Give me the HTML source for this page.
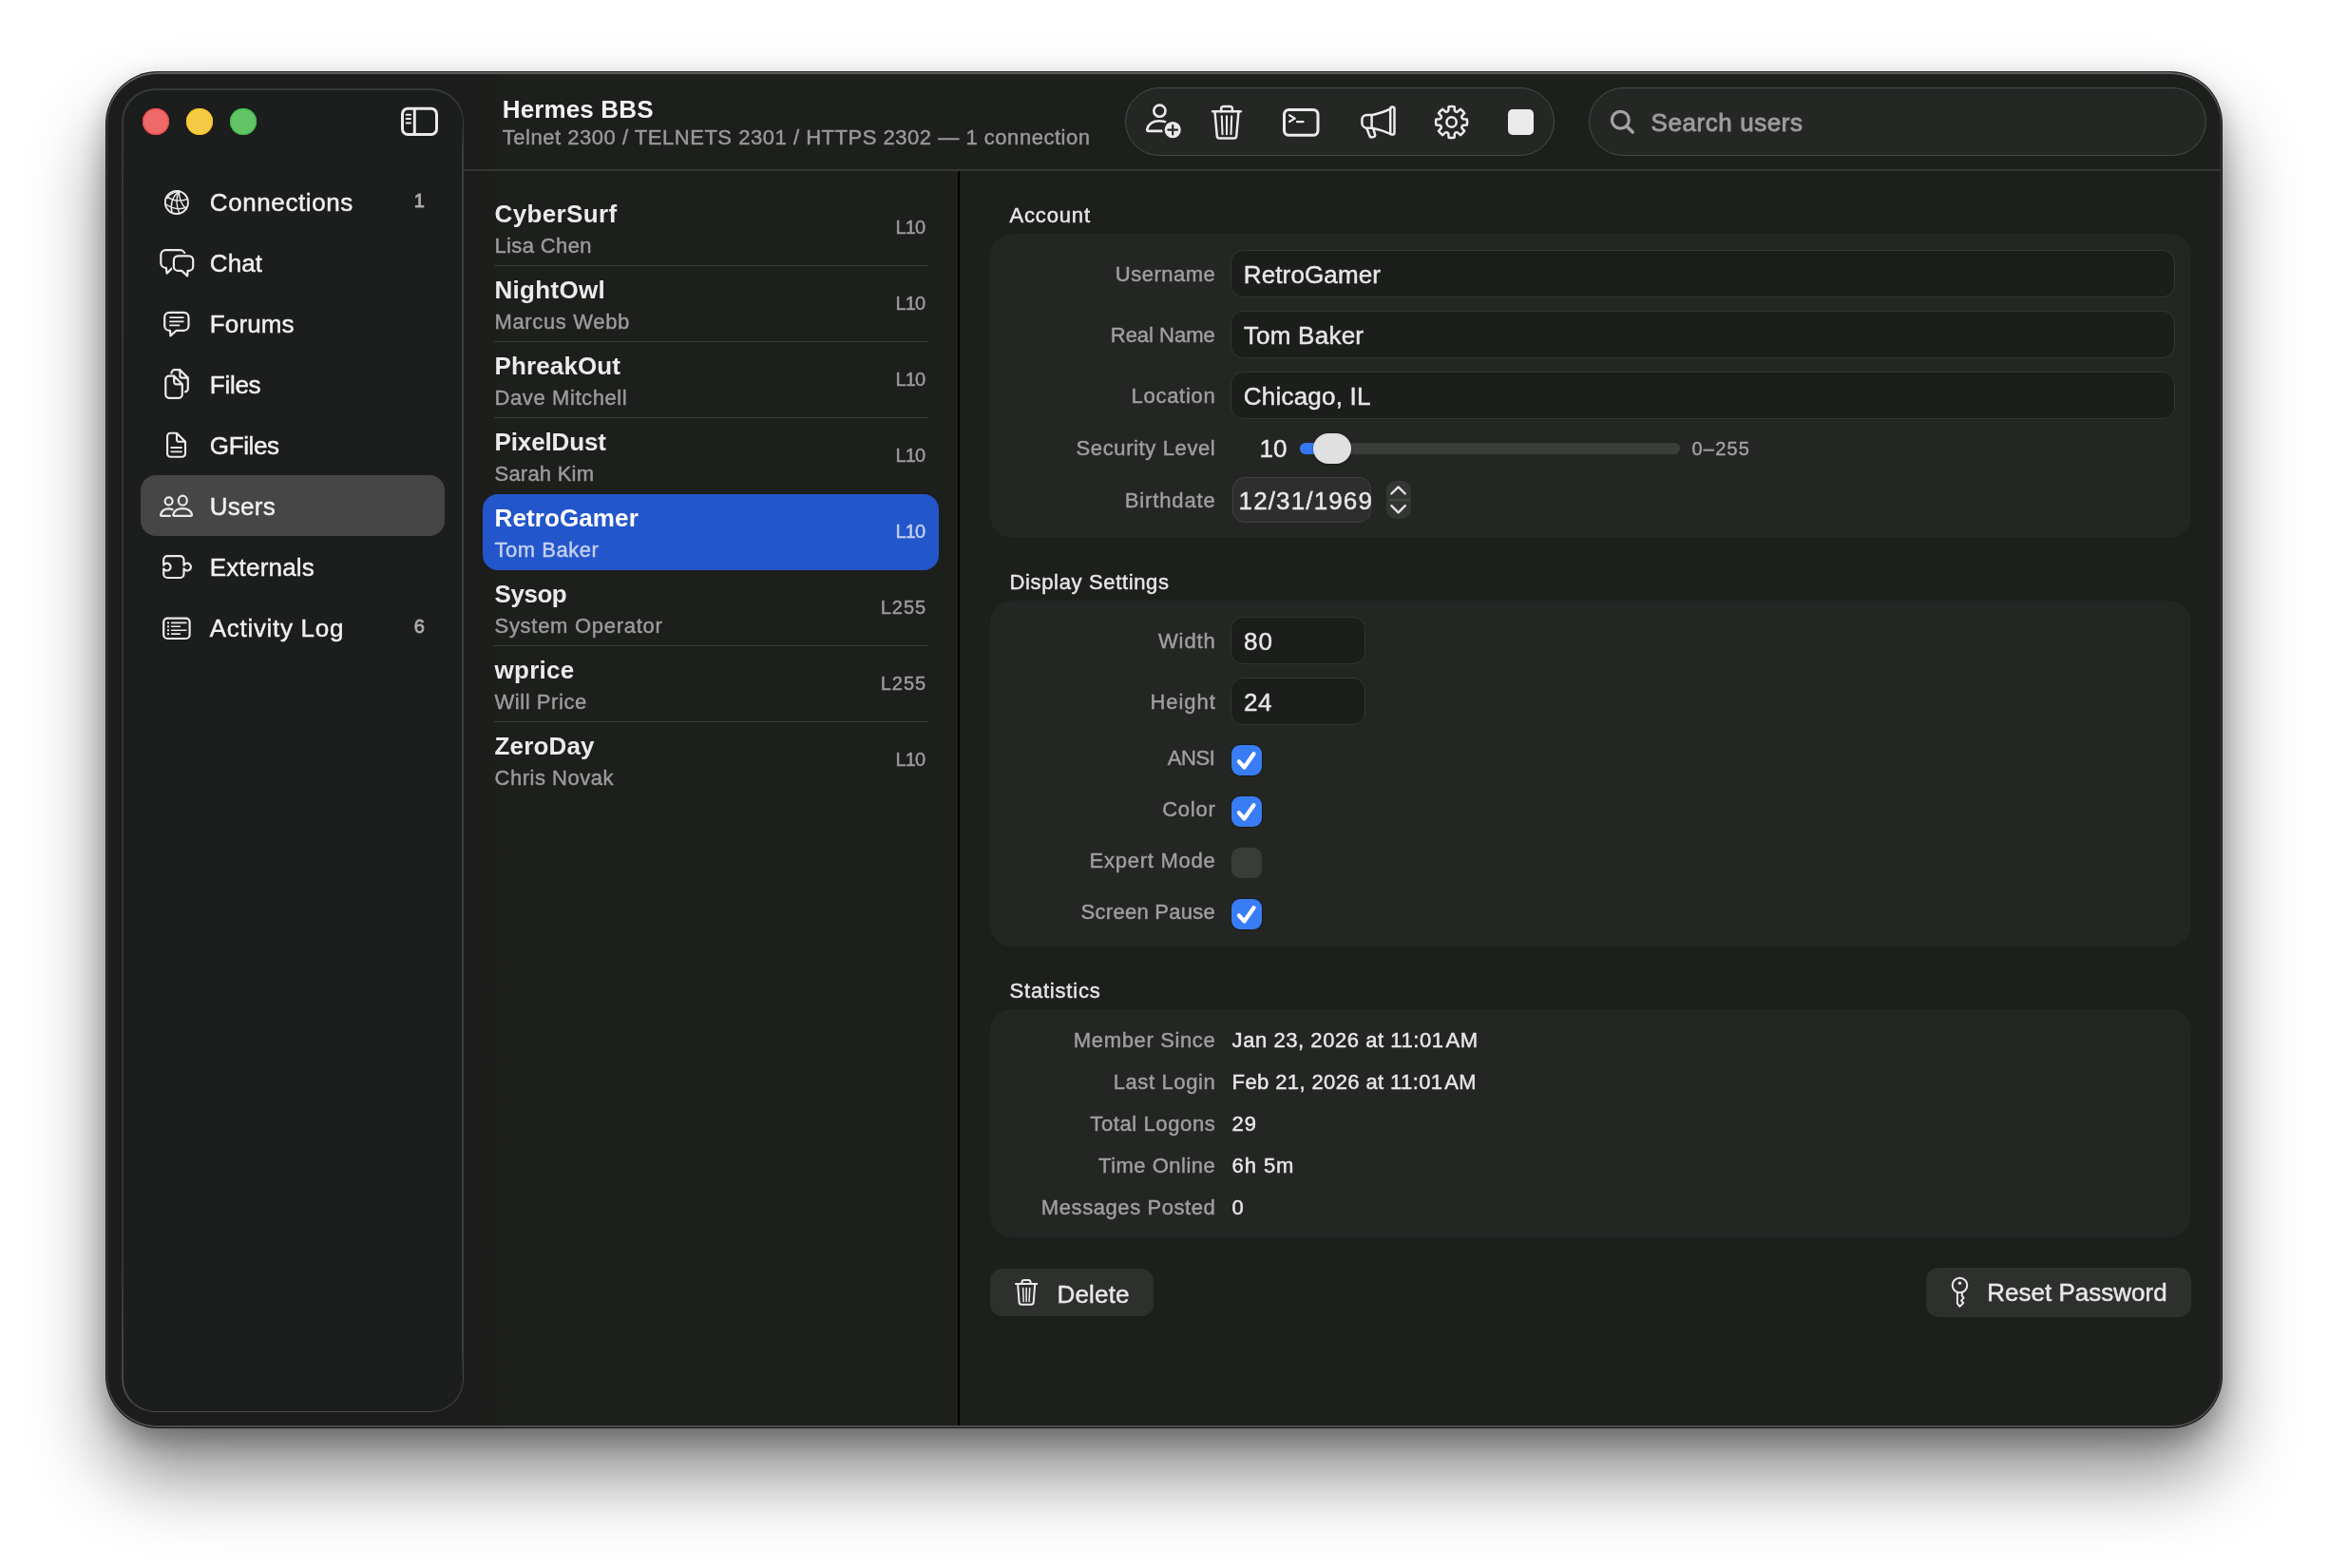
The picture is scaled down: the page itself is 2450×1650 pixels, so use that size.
<!DOCTYPE html>
<html lang="en"><head><meta charset="utf-8"><title>Hermes BBS</title><style>
html,body{margin:0;padding:0;background:#fff;}
body{width:2450px;height:1650px;position:relative;overflow:hidden;font-family:"Liberation Sans", Arial, sans-serif;}
.b{position:absolute;}
.t{position:absolute;white-space:nowrap;-webkit-text-stroke:0.45px currentColor;}
.t.bd{-webkit-text-stroke:0;}
.t.sb{-webkit-text-stroke:0.85px currentColor;}
#txt{position:absolute;left:0;top:0;width:2450px;height:1650px;will-change:transform;}
#ic{position:absolute;left:0;top:0;}
#win{position:absolute;left:112px;top:76px;width:2226px;height:1426px;border-radius:54px;background:linear-gradient(90deg,#1b1c1b 0,#1b1c1b 378px,rgba(29,31,28,0) 420px,rgba(29,31,28,0) 100%),#1d1f1c;
 box-shadow:0 0 0 1px rgba(0,0,0,.88), inset 0 2px 0 rgba(255,255,255,.24), inset 0 -2px 0 rgba(255,255,255,.15), inset 0 0 0 1.5px rgba(255,255,255,.10), 0 50px 80px rgba(0,0,0,.47), 0 12px 28px rgba(0,0,0,.28);}
</style></head>
<body>
<div id="win"></div>
<div class="b" style="left:128px;top:93px;width:360px;height:1393px;border-radius:35px;background:linear-gradient(180deg,#373c3b 0,#323534 25%,#333533 88%,#4b4c4b 100%);"></div>
<div class="b" style="left:129.5px;top:94.5px;width:357.0px;height:1390.0px;border-radius:33.5px;background:#1c1d1d;"></div>
<div class="b" style="left:486.2px;top:128px;width:1.8000000000000114px;height:1324px;border-radius:0px;background:linear-gradient(180deg,rgba(58,62,60,0) 0,#3a3e3c 30px,#3a3e3c calc(100% - 30px),rgba(58,62,60,0) 100%);"></div>
<div class="b" style="left:150px;top:114px;width:28px;height:28px;border-radius:14px;background:#ee6969;box-shadow:inset 0 0 0 1.2px #f04a48;"></div>
<div class="b" style="left:196px;top:114px;width:28px;height:28px;border-radius:14px;background:#f4cb45;box-shadow:inset 0 0 0 1.2px #f8c620;"></div>
<div class="b" style="left:242px;top:114px;width:28px;height:28px;border-radius:14px;background:#62c466;box-shadow:inset 0 0 0 1.2px #3fbf4a;"></div>
<div class="b" style="left:148px;top:500px;width:320px;height:64px;border-radius:16px;background:#464646;"></div>
<div class="b" style="left:488px;top:178px;width:1850px;height:2px;border-radius:0px;background:#343634;"></div>
<div class="b" style="left:1008px;top:180px;width:2px;height:1320px;border-radius:0px;background:#000;"></div>
<div class="b" style="left:1184px;top:92px;width:452px;height:72px;border-radius:36px;background:#252725;box-sizing:border-box;border:1.5px solid #474c49;"></div>
<div class="b" style="left:1672px;top:92px;width:650px;height:72px;border-radius:36px;background:#252725;box-sizing:border-box;border:1.5px solid #474c49;"></div>
<div class="b" style="left:508px;top:520px;width:480px;height:80px;border-radius:16px;background:#2456cb;"></div>
<div class="b" style="left:520px;top:278.7px;width:456px;height:1.400000000000034px;border-radius:0px;background:#3a3c3a;"></div>
<div class="b" style="left:520px;top:358.7px;width:456px;height:1.400000000000034px;border-radius:0px;background:#3a3c3a;"></div>
<div class="b" style="left:520px;top:438.7px;width:456px;height:1.400000000000034px;border-radius:0px;background:#3a3c3a;"></div>
<div class="b" style="left:520px;top:678.7px;width:456px;height:1.3999999999999773px;border-radius:0px;background:#3a3c3a;"></div>
<div class="b" style="left:520px;top:758.7px;width:456px;height:1.3999999999999773px;border-radius:0px;background:#3a3c3a;"></div>
<div class="b" style="left:1042px;top:246px;width:1264px;height:319.5px;border-radius:23px;background:#242624;"></div>
<div class="b" style="left:1042px;top:632px;width:1264px;height:364px;border-radius:23px;background:#242624;"></div>
<div class="b" style="left:1042px;top:1062px;width:1264px;height:239.5px;border-radius:23px;background:#242624;"></div>
<div class="b" style="left:1295px;top:262.5px;width:994px;height:50.5px;border-radius:13px;background:#1c1e1c;box-sizing:border-box;border:1.5px solid #343634;"></div>
<div class="b" style="left:1295px;top:326.5px;width:994px;height:50.5px;border-radius:13px;background:#1c1e1c;box-sizing:border-box;border:1.5px solid #343634;"></div>
<div class="b" style="left:1295px;top:390.5px;width:994px;height:50.5px;border-radius:13px;background:#1c1e1c;box-sizing:border-box;border:1.5px solid #343634;"></div>
<div class="b" style="left:1295px;top:649px;width:142px;height:50px;border-radius:13px;background:#1c1e1c;box-sizing:border-box;border:1.5px solid #343634;"></div>
<div class="b" style="left:1295px;top:713px;width:142px;height:50px;border-radius:13px;background:#1c1e1c;box-sizing:border-box;border:1.5px solid #343634;"></div>
<div class="b" style="left:1368px;top:466px;width:400px;height:12px;border-radius:6px;background:#3b3d3b;"></div>
<div class="b" style="left:1368px;top:466px;width:32px;height:12px;border-radius:6px;background:#3478f6;"></div>
<div class="b" style="left:1382px;top:456px;width:40px;height:32px;border-radius:16px;background:#e0e0e0;box-shadow:0 1px 3px rgba(0,0,0,.35);"></div>
<div class="b" style="left:1296.6px;top:502.3px;width:146.80000000000018px;height:47.400000000000034px;border-radius:13px;background:#2d2e2d;box-sizing:border-box;border:1.5px solid #404240;"></div>
<div class="b" style="left:1459.2px;top:506px;width:25.799999999999955px;height:39.60000000000002px;border-radius:10px;background:#343634;"></div>
<div class="b" style="left:1461.5px;top:525px;width:21.200000000000045px;height:1.6000000000000227px;border-radius:0px;background:#464846;"></div>
<div class="b" style="left:1296px;top:784px;width:32px;height:32px;border-radius:9px;background:#387df6;box-shadow:0 0 0 1px rgba(20,20,10,.6);"></div>
<div class="b" style="left:1296px;top:838px;width:32px;height:32px;border-radius:9px;background:#387df6;box-shadow:0 0 0 1px rgba(20,20,10,.6);"></div>
<div class="b" style="left:1296px;top:892px;width:32px;height:32px;border-radius:9px;background:#3a3c3a;"></div>
<div class="b" style="left:1296px;top:946px;width:32px;height:32px;border-radius:9px;background:#387df6;box-shadow:0 0 0 1px rgba(20,20,10,.6);"></div>
<div class="b" style="left:1042px;top:1335px;width:172px;height:50px;border-radius:13px;background:#2e302e;"></div>
<div class="b" style="left:2027px;top:1334px;width:279px;height:52px;border-radius:13px;background:#2e302e;"></div>
<svg id="ic" width="2450" height="1650" viewBox="0 0 2450 1650"><path d="M429.3,114.2H453.7a5.8,5.8 0 0 1 5.8,5.8V135.79999999999998a5.8,5.8 0 0 1 -5.8,5.8H429.3a5.8,5.8 0 0 1 -5.8,-5.8V120.0a5.8,5.8 0 0 1 5.8,-5.8Z" stroke="#eaeaea" stroke-width="3" fill="none" stroke-linecap="round" stroke-linejoin="round" />
<path d="M436.3,114.2V141.6" stroke="#eaeaea" stroke-width="3" fill="none" stroke-linecap="round" stroke-linejoin="round" />
<path d="M427.6,120.7H432" stroke="#eaeaea" stroke-width="2" fill="none" stroke-linecap="round" stroke-linejoin="round" />
<path d="M427.6,125.1H432" stroke="#eaeaea" stroke-width="2" fill="none" stroke-linecap="round" stroke-linejoin="round" />
<path d="M427.6,129.5H432" stroke="#eaeaea" stroke-width="2" fill="none" stroke-linecap="round" stroke-linejoin="round" />
<circle cx="185.9" cy="213" r="12.05" stroke="#eaeaea" stroke-width="1.9" fill="none"/>
<path d="M188,201.2 Q177.5,211 181.2,224.2" stroke="#eaeaea" stroke-width="1.4" fill="none" stroke-linecap="round" stroke-linejoin="round" />
<path d="M188,201.2 Q183.5,213 189,225" stroke="#eaeaea" stroke-width="1.4" fill="none" stroke-linecap="round" stroke-linejoin="round" />
<path d="M188.3,201.2 Q188.5,213.5 196.3,220" stroke="#eaeaea" stroke-width="1.4" fill="none" stroke-linecap="round" stroke-linejoin="round" />
<path d="M186.5,201.3 Q176,205 176.2,208.5" stroke="#eaeaea" stroke-width="1.4" fill="none" stroke-linecap="round" stroke-linejoin="round" />
<path d="M175.5,206.8 Q186,214 197.3,209.3" stroke="#eaeaea" stroke-width="1.4" fill="none" stroke-linecap="round" stroke-linejoin="round" />
<path d="M173.9,214.5 Q185,222.5 196.5,218.2" stroke="#eaeaea" stroke-width="1.4" fill="none" stroke-linecap="round" stroke-linejoin="round" />
<path d="M174.3,263.2H189.6a5,5 0 0 1 5,5V276.8a5,5 0 0 1 -5,5H181.6L175.6,287.6L174.9,281.8H174.3a5,5 0 0 1 -5,-5V268.2a5,5 0 0 1 5,-5Z" stroke="#eaeaea" stroke-width="2.2" fill="none" stroke-linecap="round" stroke-linejoin="round" />
<path d="M187.4,269.3H198.7a4.5,4.5 0 0 1 4.5,4.5V280.4a4.5,4.5 0 0 1 -4.5,4.5H197.6L197.2,290.4L191.2,284.9H187.4a4.5,4.5 0 0 1 -4.5,-4.5V273.8a4.5,4.5 0 0 1 4.5,-4.5Z" stroke="#1c1d1d" stroke-width="4.4" fill="#1c1d1d" stroke-linecap="round" stroke-linejoin="round" />
<path d="M187.4,269.3H198.7a4.5,4.5 0 0 1 4.5,4.5V280.4a4.5,4.5 0 0 1 -4.5,4.5H197.6L197.2,290.4L191.2,284.9H187.4a4.5,4.5 0 0 1 -4.5,-4.5V273.8a4.5,4.5 0 0 1 4.5,-4.5Z" stroke="#eaeaea" stroke-width="2.2" fill="none" stroke-linecap="round" stroke-linejoin="round" />
<path d="M178.2,328.9H193.5a5,5 0 0 1 5,5V342.8a5,5 0 0 1 -5,5H185.6L179.4,353.4L179,347.8H178.2a5,5 0 0 1 -5,-5V333.9a5,5 0 0 1 5,-5Z" stroke="#eaeaea" stroke-width="2.2" fill="none" stroke-linecap="round" stroke-linejoin="round" />
<path d="M179,334.1H192.8" stroke="#eaeaea" stroke-width="1.8" fill="none" stroke-linecap="round" stroke-linejoin="round" />
<path d="M179,338.4H192.8" stroke="#eaeaea" stroke-width="1.8" fill="none" stroke-linecap="round" stroke-linejoin="round" />
<path d="M179,342.4H188.5" stroke="#eaeaea" stroke-width="1.8" fill="none" stroke-linecap="round" stroke-linejoin="round" />
<path d="M183.9,389.2H189.4L197.8,397.59999999999997V408.9a3.5,3.5 0 0 1 -3.5,3.5H183.9a3.5,3.5 0 0 1 -3.5,-3.5V392.7a3.5,3.5 0 0 1 3.5,-3.5ZM189.4,389.2V395.4a2.2,2.2 0 0 0 2.2,2.2H197.8" stroke="#eaeaea" stroke-width="2.2" fill="none" stroke-linecap="round" stroke-linejoin="round" />
<path d="M177.8,395.7H183.20000000000002L191.8,404.3V415.3a3.5,3.5 0 0 1 -3.5,3.5H177.8a3.5,3.5 0 0 1 -3.5,-3.5V399.2a3.5,3.5 0 0 1 3.5,-3.5ZM183.20000000000002,395.7V402.1a2.2,2.2 0 0 0 2.2,2.2H191.8" stroke="#1c1d1d" stroke-width="4.6" fill="#1c1d1d" stroke-linecap="round" stroke-linejoin="round" />
<path d="M177.8,395.7H183.20000000000002L191.8,404.3V415.3a3.5,3.5 0 0 1 -3.5,3.5H177.8a3.5,3.5 0 0 1 -3.5,-3.5V399.2a3.5,3.5 0 0 1 3.5,-3.5ZM183.20000000000002,395.7V402.1a2.2,2.2 0 0 0 2.2,2.2H191.8" stroke="#eaeaea" stroke-width="2.2" fill="none" stroke-linecap="round" stroke-linejoin="round" />
<path d="M179.29999999999998,455.8H186L195,464.8V477.6a3.2,3.2 0 0 1 -3.2,3.2H179.29999999999998a3.2,3.2 0 0 1 -3.2,-3.2V459.0a3.2,3.2 0 0 1 3.2,-3.2ZM186,455.8V462.6a2.2,2.2 0 0 0 2.2,2.2H195" stroke="#eaeaea" stroke-width="2.1" fill="none" stroke-linecap="round" stroke-linejoin="round" />
<path d="M180.2,471H191" stroke="#eaeaea" stroke-width="1.8" fill="none" stroke-linecap="round" stroke-linejoin="round" />
<path d="M180.2,475.3H191" stroke="#eaeaea" stroke-width="1.8" fill="none" stroke-linecap="round" stroke-linejoin="round" />
<circle cx="177.6" cy="527.4" r="3.95" stroke="#eaeaea" stroke-width="2.2" fill="none"/>
<path d="M178.9,542.9H170.3Q168.8,542.9 169.1,541.4C170.2,537.4 173.6,535.4 177.6,535.4C179.2,535.4 180.5,535.7 181.6,536.3" stroke="#eaeaea" stroke-width="2.2" fill="none" stroke-linecap="round" stroke-linejoin="round" />
<ellipse cx="192.3" cy="526.7" rx="4.5" ry="5" stroke="#eaeaea" stroke-width="2.2" fill="none"/>
<path d="M183.6,542.9H200.7Q202.3,542.9 202,541.3C200.8,537.6 197.3,535.2 192.2,535.2C187,535.2 183.5,537.6 182.3,541.3Q182,542.9 183.6,542.9Z" stroke="#eaeaea" stroke-width="2.2" fill="none" stroke-linecap="round" stroke-linejoin="round" />
<path d="M172.2,594.9V589.2a4,4 0 0 1 4,-4H189.5a4,4 0 0 1 4,4V594.9A3.9,3.9 0 1 1 193.5,598.3V604a4,4 0 0 1 -4,4H176.2a4,4 0 0 1 -4,-4V598.3A3.9,3.9 0 1 0 172.2,594.9" stroke="#eaeaea" stroke-width="2.2" fill="none" stroke-linecap="round" stroke-linejoin="round" />
<path d="M176.2,650.6H195.6a4,4 0 0 1 4,4V668a4,4 0 0 1 -4,4H176.2a4,4 0 0 1 -4,-4V654.6a4,4 0 0 1 4,-4Z" stroke="#eaeaea" stroke-width="2.2" fill="none" stroke-linecap="round" stroke-linejoin="round" />
<rect x="176" y="654.4" width="2" height="2" fill="#eaeaea"/>
<path d="M180.6,655.4H195.9" stroke="#eaeaea" stroke-width="1.6" fill="none" stroke-linecap="round" stroke-linejoin="round" />
<rect x="176" y="658.3" width="2" height="2" fill="#eaeaea"/>
<path d="M180.6,659.3H189.4" stroke="#eaeaea" stroke-width="1.6" fill="none" stroke-linecap="round" stroke-linejoin="round" />
<rect x="176" y="662.2" width="2" height="2" fill="#eaeaea"/>
<path d="M180.6,663.2H195.9" stroke="#eaeaea" stroke-width="1.6" fill="none" stroke-linecap="round" stroke-linejoin="round" />
<rect x="176" y="666.1" width="2" height="2" fill="#eaeaea"/>
<path d="M180.6,667.1H189.4" stroke="#eaeaea" stroke-width="1.6" fill="none" stroke-linecap="round" stroke-linejoin="round" />
<circle cx="1220.4" cy="116.7" r="6.1" stroke="#eaeaea" stroke-width="2.6" fill="none"/>
<path d="M1226,137.9H1208.6Q1206.8,137.9 1207.2,136.1C1208.6,130.4 1213.6,127.2 1220.4,127.2C1224,127.2 1227,128.2 1229.2,129.8" stroke="#eaeaea" stroke-width="2.6" fill="none" stroke-linecap="round" stroke-linejoin="round" />
<circle cx="1234.2" cy="136.6" r="10.9" fill="#252725"/>
<circle cx="1234.2" cy="136.6" r="8.6" fill="#eaeaea"/>
<path d="M1229.3,136.6H1239.1M1234.2,131.7V141.5" stroke="#252725" stroke-width="2.1" fill="none" stroke-linecap="round" stroke-linejoin="round" />
<path d="M1276.2,117.3H1305.8" stroke="#eaeaea" stroke-width="2.5" fill="none" stroke-linecap="round" stroke-linejoin="round" />
<path d="M1285.2,117.3V114.5a2.5,2.5 0 0 1 2.5,-2.5H1294.4a2.5,2.5 0 0 1 2.5,2.5V117.3" stroke="#eaeaea" stroke-width="2.5" fill="none" stroke-linecap="round" stroke-linejoin="round" />
<path d="M1278.6000000000001,118.5L1280.8,143.2Q1281.0,145.6 1283.3999999999999,145.6H1298.6000000000001Q1301.0,145.6 1301.2,143.2L1303.3999999999999,118.5" stroke="#eaeaea" stroke-width="2.5" fill="none" stroke-linecap="round" stroke-linejoin="round" />
<path d="M1285.8,122.3L1286.5,141.2" stroke="#eaeaea" stroke-width="2.1" fill="none" stroke-linecap="round" stroke-linejoin="round" />
<path d="M1291,122.3L1291,141.2" stroke="#eaeaea" stroke-width="2.1" fill="none" stroke-linecap="round" stroke-linejoin="round" />
<path d="M1296.2,122.3L1295.5,141.2" stroke="#eaeaea" stroke-width="2.1" fill="none" stroke-linecap="round" stroke-linejoin="round" />
<path d="M1356.5,115.4H1382a5,5 0 0 1 5,5V137.3a5,5 0 0 1 -5,5H1356.5a5,5 0 0 1 -5,-5V120.4a5,5 0 0 1 5,-5Z" stroke="#eaeaea" stroke-width="3" fill="none" stroke-linecap="round" stroke-linejoin="round" />
<path d="M1357,121.2L1362.8,124.6L1357,128" stroke="#eaeaea" stroke-width="2.2" fill="none" stroke-linecap="round" stroke-linejoin="round" />
<path d="M1365,128.2H1371.5" stroke="#eaeaea" stroke-width="2.2" fill="none" stroke-linecap="round" stroke-linejoin="round" />
<path d="M1465.3,112.5H1465.4a2.1,2.1 0 0 1 2.1,2.1V139.4a2.1,2.1 0 0 1 -2.1,2.1H1465.3a2.1,2.1 0 0 1 -2.1,-2.1V114.6a2.1,2.1 0 0 1 2.1,-2.1Z" stroke="#eaeaea" stroke-width="2.5" fill="none" stroke-linecap="round" stroke-linejoin="round" />
<path d="M1443.6,121.2Q1455,118.5 1463.2,114.6" stroke="#eaeaea" stroke-width="2.5" fill="none" stroke-linecap="round" stroke-linejoin="round" />
<path d="M1443.6,134.8Q1455,137 1463.2,141" stroke="#eaeaea" stroke-width="2.5" fill="none" stroke-linecap="round" stroke-linejoin="round" />
<path d="M1443.6,120.9H1438.6a5.2,5.2 0 0 0 -5.2,5.2V129.5a5.2,5.2 0 0 0 5.2,5.2H1443.6Z" stroke="#eaeaea" stroke-width="2.5" fill="none" stroke-linecap="round" stroke-linejoin="round" />
<path d="M1438.4,135.2L1441.5,143.1Q1442.4,145 1444.3,144.4L1445.9,143.9Q1447.6,143.2 1447.1,141.6L1445.3,135.6" stroke="#eaeaea" stroke-width="2.5" fill="none" stroke-linecap="round" stroke-linejoin="round" />
<path d="M1524.34,116.33L1524.59,112.28A16.5,16.5 0 0 1 1530.61,112.28L1530.86,116.33Q1531.81,118.34 1533.90,117.59L1536.95,114.90A16.5,16.5 0 0 1 1541.20,119.15L1538.51,122.20Q1537.76,124.29 1539.77,125.24L1543.82,125.49A16.5,16.5 0 0 1 1543.82,131.51L1539.77,131.76Q1537.76,132.71 1538.51,134.80L1541.20,137.85A16.5,16.5 0 0 1 1536.95,142.10L1533.90,139.41Q1531.81,138.66 1530.86,140.67L1530.61,144.72A16.5,16.5 0 0 1 1524.59,144.72L1524.34,140.67Q1523.39,138.66 1521.30,139.41L1518.25,142.10A16.5,16.5 0 0 1 1514.00,137.85L1516.69,134.80Q1517.44,132.71 1515.43,131.76L1511.38,131.51A16.5,16.5 0 0 1 1511.38,125.49L1515.43,125.24Q1517.44,124.29 1516.69,122.20L1514.00,119.15A16.5,16.5 0 0 1 1518.25,114.90L1521.30,117.59Q1523.39,118.34 1524.34,116.33Z" stroke="#eaeaea" stroke-width="2.5" fill="none" stroke-linecap="round" stroke-linejoin="round" />
<circle cx="1527.6" cy="128.5" r="5.2" stroke="#eaeaea" stroke-width="2.5" fill="none"/>
<rect x="1587" y="115" width="27" height="27" rx="5" fill="#ebebeb"/>
<circle cx="1705.35" cy="126.25" r="8.95" stroke="#a4a4a4" stroke-width="3.2" fill="none"/>
<path d="M1712,133L1718.2,139.1" stroke="#a4a4a4" stroke-width="3.5" fill="none" stroke-linecap="round" stroke-linejoin="round" />
<path d="M1464.4,519.5L1471.6,512.4L1478.8,519.5" stroke="#e2e2e2" stroke-width="2.4" fill="none" stroke-linecap="round" stroke-linejoin="round" />
<path d="M1464.4,532.2L1471.6,539.3L1478.8,532.2" stroke="#e2e2e2" stroke-width="2.4" fill="none" stroke-linecap="round" stroke-linejoin="round" />
<path d="M1303.9,801.3L1309.5,807.5L1319.5,793.2" stroke="#ffffff" stroke-width="4.2" fill="none" stroke-linecap="round" stroke-linejoin="round" />
<path d="M1303.9,855.3L1309.5,861.5L1319.5,847.2" stroke="#ffffff" stroke-width="4.2" fill="none" stroke-linecap="round" stroke-linejoin="round" />
<path d="M1303.9,963.3L1309.5,969.5L1319.5,955.2" stroke="#ffffff" stroke-width="4.2" fill="none" stroke-linecap="round" stroke-linejoin="round" />
<path d="M1069,1351H1091.3" stroke="#eaeaea" stroke-width="2" fill="none" stroke-linecap="round" stroke-linejoin="round" />
<path d="M1075.4,1351V1349.5a2.5,2.5 0 0 1 2.5,-2.5H1082.1a2.5,2.5 0 0 1 2.5,2.5V1351" stroke="#eaeaea" stroke-width="2" fill="none" stroke-linecap="round" stroke-linejoin="round" />
<path d="M1071.2,1352.2L1072.6,1370.3999999999999Q1072.8,1372.8 1075.1999999999998,1372.8H1085.1000000000001Q1087.5,1372.8 1087.7,1370.3999999999999L1089.1,1352.2" stroke="#eaeaea" stroke-width="2" fill="none" stroke-linecap="round" stroke-linejoin="round" />
<path d="M1076.6,1355.4L1077.2,1369.6" stroke="#eaeaea" stroke-width="1.5" fill="none" stroke-linecap="round" stroke-linejoin="round" />
<path d="M1080.15,1355.4L1080.15,1369.6" stroke="#eaeaea" stroke-width="1.5" fill="none" stroke-linecap="round" stroke-linejoin="round" />
<path d="M1083.7,1355.4L1083.1,1369.6" stroke="#eaeaea" stroke-width="1.5" fill="none" stroke-linecap="round" stroke-linejoin="round" />
<circle cx="2062.5" cy="1352.5" r="7.75" stroke="#eaeaea" stroke-width="2" fill="none"/>
<circle cx="2062.5" cy="1350.3" r="1.7" fill="#eaeaea"/>
<path d="M2059.9,1359.8V1371.7L2062.5,1374.8L2066.3,1371L2064,1368.6L2066.6,1365.8L2064.6,1363.2L2065.2,1359.8" stroke="#eaeaea" stroke-width="1.9" fill="none" stroke-linecap="round" stroke-linejoin="round" /></svg>
<div id="txt">
<div class="t bd" id="t0" style="left:528.75px;top:98.69px;font-size:26px;line-height:32px;color:#f2f2f2;font-weight:bold;letter-spacing:0.137px;">Hermes BBS</div>
<div class="t" id="t1" style="left:528.75px;top:131.08px;font-size:22px;line-height:28px;color:#999999;letter-spacing:0.528px;">Telnet 2300 / TELNETS 2301 / HTTPS 2302 — 1 connection</div>
<div class="t sb" id="t2" style="left:1737.60px;top:112.59px;font-size:26px;line-height:32px;color:#9d9d9d;letter-spacing:0.565px;">Search users</div>
<div class="t" id="t3" style="left:220.80px;top:196.99px;font-size:26px;line-height:32px;color:#f0f0f0;letter-spacing:0.595px;">Connections</div>
<div class="t" id="t4" style="left:220.80px;top:260.99px;font-size:26px;line-height:32px;color:#f0f0f0;letter-spacing:0.093px;">Chat</div>
<div class="t" id="t5" style="left:220.80px;top:324.99px;font-size:26px;line-height:32px;color:#f0f0f0;letter-spacing:0.135px;">Forums</div>
<div class="t" id="t6" style="left:220.80px;top:388.99px;font-size:26px;line-height:32px;color:#f0f0f0;letter-spacing:-0.277px;">Files</div>
<div class="t" id="t7" style="left:220.80px;top:452.99px;font-size:26px;line-height:32px;color:#f0f0f0;letter-spacing:-0.365px;">GFiles</div>
<div class="t" id="t8" style="left:220.80px;top:516.99px;font-size:26px;line-height:32px;color:#f0f0f0;letter-spacing:0.248px;">Users</div>
<div class="t" id="t9" style="left:220.80px;top:580.99px;font-size:26px;line-height:32px;color:#f0f0f0;letter-spacing:0.201px;">Externals</div>
<div class="t" id="t10" style="left:220.80px;top:644.99px;font-size:26px;line-height:32px;color:#f0f0f0;letter-spacing:0.695px;">Activity Log</div>
<div class="t sb" id="t11" style="right:2003.20px;top:199.47px;font-size:20px;line-height:25px;color:#ababab;">1</div>
<div class="t sb" id="t12" style="right:2003.20px;top:647.47px;font-size:20px;line-height:25px;color:#ababab;">6</div>
<div class="t bd" id="t13" style="left:520.50px;top:208.74px;font-size:26px;line-height:32px;color:#ebebeb;font-weight:bold;letter-spacing:0.381px;">CyberSurf</div>
<div class="t" id="t14" style="left:520.50px;top:244.83px;font-size:22px;line-height:28px;color:#9b9b9b;letter-spacing:0.365px;">Lisa Chen</div>
<div class="t" id="t15" style="right:1476.61px;top:227.17px;font-size:20px;line-height:25px;color:#9b9b9b;letter-spacing:-0.812px;">L10</div>
<div class="t bd" id="t16" style="left:520.50px;top:288.74px;font-size:26px;line-height:32px;color:#ebebeb;font-weight:bold;letter-spacing:0.308px;">NightOwl</div>
<div class="t" id="t17" style="left:520.50px;top:324.83px;font-size:22px;line-height:28px;color:#9b9b9b;letter-spacing:0.644px;">Marcus Webb</div>
<div class="t" id="t18" style="right:1476.61px;top:307.17px;font-size:20px;line-height:25px;color:#9b9b9b;letter-spacing:-0.812px;">L10</div>
<div class="t bd" id="t19" style="left:520.50px;top:368.74px;font-size:26px;line-height:32px;color:#ebebeb;font-weight:bold;letter-spacing:0.125px;">PhreakOut</div>
<div class="t" id="t20" style="left:520.50px;top:404.83px;font-size:22px;line-height:28px;color:#9b9b9b;letter-spacing:0.600px;">Dave Mitchell</div>
<div class="t" id="t21" style="right:1476.61px;top:387.17px;font-size:20px;line-height:25px;color:#9b9b9b;letter-spacing:-0.812px;">L10</div>
<div class="t bd" id="t22" style="left:520.50px;top:448.74px;font-size:26px;line-height:32px;color:#ebebeb;font-weight:bold;letter-spacing:-0.125px;">PixelDust</div>
<div class="t" id="t23" style="left:520.50px;top:484.83px;font-size:22px;line-height:28px;color:#9b9b9b;letter-spacing:0.223px;">Sarah Kim</div>
<div class="t" id="t24" style="right:1476.61px;top:467.17px;font-size:20px;line-height:25px;color:#9b9b9b;letter-spacing:-0.812px;">L10</div>
<div class="t bd" id="t25" style="left:520.50px;top:528.74px;font-size:26px;line-height:32px;color:#ffffff;font-weight:bold;letter-spacing:0.108px;">RetroGamer</div>
<div class="t" id="t26" style="left:520.50px;top:564.83px;font-size:22px;line-height:28px;color:#c3d0f1;letter-spacing:0.512px;">Tom Baker</div>
<div class="t" id="t27" style="right:1476.61px;top:547.17px;font-size:20px;line-height:25px;color:#c3d0f1;letter-spacing:-0.812px;">L10</div>
<div class="t bd" id="t28" style="left:520.50px;top:608.74px;font-size:26px;line-height:32px;color:#ebebeb;font-weight:bold;letter-spacing:-0.445px;">Sysop</div>
<div class="t" id="t29" style="left:520.50px;top:644.83px;font-size:22px;line-height:28px;color:#9b9b9b;letter-spacing:0.712px;">System Operator</div>
<div class="t" id="t30" style="right:1474.80px;top:627.17px;font-size:20px;line-height:25px;color:#9b9b9b;letter-spacing:1.000px;">L255</div>
<div class="t bd" id="t31" style="left:520.50px;top:688.74px;font-size:26px;line-height:32px;color:#ebebeb;font-weight:bold;letter-spacing:0.275px;">wprice</div>
<div class="t" id="t32" style="left:520.50px;top:724.83px;font-size:22px;line-height:28px;color:#9b9b9b;letter-spacing:0.564px;">Will Price</div>
<div class="t" id="t33" style="right:1474.80px;top:707.17px;font-size:20px;line-height:25px;color:#9b9b9b;letter-spacing:1.000px;">L255</div>
<div class="t bd" id="t34" style="left:520.50px;top:768.74px;font-size:26px;line-height:32px;color:#ebebeb;font-weight:bold;letter-spacing:0.159px;">ZeroDay</div>
<div class="t" id="t35" style="left:520.50px;top:804.83px;font-size:22px;line-height:28px;color:#9b9b9b;letter-spacing:0.519px;">Chris Novak</div>
<div class="t" id="t36" style="right:1476.61px;top:787.17px;font-size:20px;line-height:25px;color:#9b9b9b;letter-spacing:-0.812px;">L10</div>
<div class="t" id="t37" style="left:1062.50px;top:212.83px;font-size:22px;line-height:28px;color:#e6e6e6;letter-spacing:0.833px;">Account</div>
<div class="t" id="t38" style="left:1062.50px;top:599.08px;font-size:22px;line-height:28px;color:#e6e6e6;letter-spacing:0.650px;">Display Settings</div>
<div class="t" id="t39" style="left:1062.50px;top:1028.58px;font-size:22px;line-height:28px;color:#e6e6e6;letter-spacing:0.808px;">Statistics</div>
<div class="t" id="t40" style="right:1170.75px;top:275.08px;font-size:22px;line-height:28px;color:#9f9f9f;letter-spacing:0.502px;">Username</div>
<div class="t" id="t41" style="right:1171.26px;top:339.08px;font-size:22px;line-height:28px;color:#9f9f9f;letter-spacing:-0.006px;">Real Name</div>
<div class="t" id="t42" style="right:1170.53px;top:403.08px;font-size:22px;line-height:28px;color:#9f9f9f;letter-spacing:0.723px;">Location</div>
<div class="t" id="t43" style="right:1170.63px;top:458.08px;font-size:22px;line-height:28px;color:#9f9f9f;letter-spacing:0.620px;">Security Level</div>
<div class="t" id="t44" style="right:1170.38px;top:512.83px;font-size:22px;line-height:28px;color:#9f9f9f;letter-spacing:0.867px;">Birthdate</div>
<div class="t" id="t45" style="right:1170.36px;top:661.08px;font-size:22px;line-height:28px;color:#9f9f9f;letter-spacing:0.887px;">Width</div>
<div class="t" id="t46" style="right:1170.33px;top:725.08px;font-size:22px;line-height:28px;color:#9f9f9f;letter-spacing:0.921px;">Height</div>
<div class="t" id="t47" style="right:1171.70px;top:784.08px;font-size:22px;line-height:28px;color:#9f9f9f;letter-spacing:-0.453px;">ANSI</div>
<div class="t" id="t48" style="right:1170.49px;top:838.08px;font-size:22px;line-height:28px;color:#9f9f9f;letter-spacing:0.755px;">Color</div>
<div class="t" id="t49" style="right:1170.50px;top:892.08px;font-size:22px;line-height:28px;color:#9f9f9f;letter-spacing:0.747px;">Expert Mode</div>
<div class="t" id="t50" style="right:1170.98px;top:946.08px;font-size:22px;line-height:28px;color:#9f9f9f;letter-spacing:0.272px;">Screen Pause</div>
<div class="t" id="t51" style="right:1170.61px;top:1081.08px;font-size:22px;line-height:28px;color:#9f9f9f;letter-spacing:0.641px;">Member Since</div>
<div class="t" id="t52" style="right:1170.63px;top:1125.08px;font-size:22px;line-height:28px;color:#9f9f9f;letter-spacing:0.619px;">Last Login</div>
<div class="t" id="t53" style="right:1170.64px;top:1169.08px;font-size:22px;line-height:28px;color:#9f9f9f;letter-spacing:0.612px;">Total Logons</div>
<div class="t" id="t54" style="right:1170.76px;top:1213.08px;font-size:22px;line-height:28px;color:#9f9f9f;letter-spacing:0.492px;">Time Online</div>
<div class="t" id="t55" style="right:1170.68px;top:1257.08px;font-size:22px;line-height:28px;color:#9f9f9f;letter-spacing:0.573px;">Messages Posted</div>
<div class="t" id="t56" style="left:1308.75px;top:272.99px;font-size:26px;line-height:32px;color:#e7e7e7;letter-spacing:0.134px;">RetroGamer</div>
<div class="t" id="t57" style="left:1308.75px;top:336.99px;font-size:26px;line-height:32px;color:#e7e7e7;letter-spacing:0.248px;">Tom Baker</div>
<div class="t" id="t58" style="left:1308.75px;top:400.99px;font-size:26px;line-height:32px;color:#e7e7e7;letter-spacing:0.222px;">Chicago, IL</div>
<div class="t" id="t59" style="left:1325.50px;top:455.99px;font-size:26px;line-height:32px;color:#e7e7e7;letter-spacing:0.078px;">10</div>
<div class="t" id="t60" style="left:1780.50px;top:459.82px;font-size:20px;line-height:25px;color:#a0a0a0;letter-spacing:1.219px;">0–255</div>
<div class="t" id="t61" style="left:1303.60px;top:510.69px;font-size:26px;line-height:32px;color:#e7e7e7;letter-spacing:1.129px;">12/31/1969</div>
<div class="t" id="t62" style="left:1308.90px;top:658.59px;font-size:26px;line-height:32px;color:#e7e7e7;letter-spacing:1.078px;">80</div>
<div class="t" id="t63" style="left:1308.90px;top:722.59px;font-size:26px;line-height:32px;color:#e7e7e7;letter-spacing:0.578px;">24</div>
<div class="t" id="t64" style="left:1296.60px;top:1081.08px;font-size:22px;line-height:28px;color:#e7e7e7;letter-spacing:0.560px;">Jan 23, 2026 at 11:01<span style="margin-left:-3.5px"> AM</span></div>
<div class="t" id="t65" style="left:1296.60px;top:1125.08px;font-size:22px;line-height:28px;color:#e7e7e7;letter-spacing:0.393px;">Feb 21, 2026 at 11:01<span style="margin-left:-3.5px"> AM</span></div>
<div class="t" id="t66" style="left:1296.60px;top:1169.08px;font-size:22px;line-height:28px;color:#e7e7e7;letter-spacing:0.916px;">29</div>
<div class="t" id="t67" style="left:1296.60px;top:1213.08px;font-size:22px;line-height:28px;color:#e7e7e7;letter-spacing:0.911px;">6h 5m</div>
<div class="t" id="t68" style="left:1296.60px;top:1257.08px;font-size:22px;line-height:28px;color:#e7e7e7;letter-spacing:-0.250px;">0</div>
<div class="t" id="t69" style="left:1112.50px;top:1346.24px;font-size:26px;line-height:32px;color:#e7e7e7;letter-spacing:0.169px;">Delete</div>
<div class="t" id="t70" style="left:2091.25px;top:1343.74px;font-size:26px;line-height:32px;color:#e7e7e7;letter-spacing:0.007px;">Reset Password</div>
</div>
</body></html>
